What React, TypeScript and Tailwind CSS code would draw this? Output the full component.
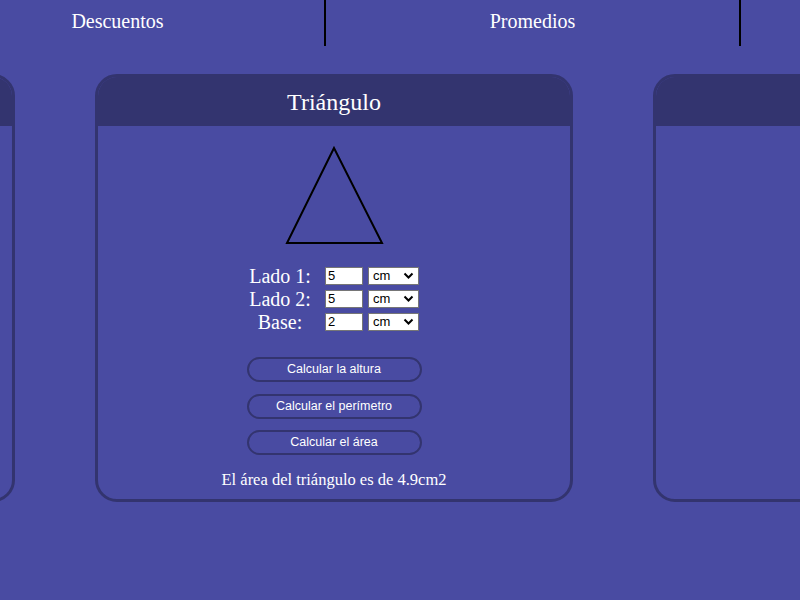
import React from "react";

const serif = { fontFamily: '"Liberation Serif", "DejaVu Serif", serif' };

function Card({ title, children }: { title?: string; children?: React.ReactNode }) {
  return (
    <div className="w-[478px] h-[428px] shrink-0 rounded-[22px] border-[3px] border-[#33346f] overflow-hidden flex flex-col">
      <div className="h-[49px] bg-[#33346f] flex items-center justify-center text-white text-[24px] shrink-0" style={serif}>
        {title}
      </div>
      <div className="flex-1 flex flex-col items-center">{children}</div>
    </div>
  );
}

function Row({ label, value }: { label: string; value: string }) {
  return (
    <div className="flex items-center h-[23px]">
      <div className="w-[62px] text-center text-white text-[20px] leading-[20px]" style={serif}>
        {label}
      </div>
      <input
        defaultValue={value}
        className="ml-[14px] w-[38px] h-[18px] bg-white text-black text-[13px] px-[2px] border border-[#767676] outline-none"
        style={{ fontFamily: '"Liberation Sans", Arial, sans-serif' }}
      />
      <div
        className="ml-[5px] w-[51px] h-[18px] bg-white border border-[#767676] flex items-center justify-between px-[4px] text-[13px] text-black"
        style={{ fontFamily: '"Liberation Sans", Arial, sans-serif' }}
      >
        <span>cm</span>
        <svg width="11" height="8" viewBox="0 0 11 8">
          <path d="M1.5 1.5 L5.5 5.5 L9.5 1.5" fill="none" stroke="#000" strokeWidth="2" />
        </svg>
      </div>
    </div>
  );
}

function Btn({ children }: { children: React.ReactNode }) {
  return (
    <button
      className="w-[175px] h-[25px] rounded-full border-2 border-[#33346f] text-white text-[12.5px] leading-none"
      style={{ fontFamily: '"Liberation Sans", Arial, sans-serif' }}
    >
      {children}
    </button>
  );
}

export default function App() {
  return (
    <div className="w-[800px] h-[600px] overflow-hidden bg-[#494ba2]">
      <nav className="flex ml-[-89px] h-[46px]">
        {["Descuentos", "Promedios", ""].map((t, i) => (
          <div
            key={i}
            className={`w-[415px] shrink-0 h-[46px] flex justify-center pt-[9px] text-white text-[20px] leading-[24px] ${
              i < 2 ? "border-r-2 border-black" : ""
            }`}
            style={serif}
          >
            {t}
          </div>
        ))}
      </nav>
      <div className="flex gap-[80px] ml-[-463px] mt-[28px]">
        <Card title="" />
        <Card title="Triángulo">
          <svg width="100" height="100" viewBox="0 0 100 100" className="mt-[20px]">
            <polygon points="50,2 3,97 98,97" fill="none" stroke="#000" strokeWidth="2" />
          </svg>
          <div className="mt-[18px] flex flex-col">
            <Row label="Lado 1:" value="5" />
            <Row label="Lado 2:" value="5" />
            <Row label="Base:" value="2" />
          </div>
          <div className="mt-[24px] flex flex-col gap-[11.5px]">
            <Btn>Calcular la altura</Btn>
            <Btn>Calcular el perímetro</Btn>
            <Btn>Calcular el área</Btn>
          </div>
          <p className="mt-[13px] text-white text-[16.5px]" style={serif}>
            El área del triángulo es de 4.9cm2
          </p>
        </Card>
        <Card title="" />
      </div>
    </div>
  );
}
